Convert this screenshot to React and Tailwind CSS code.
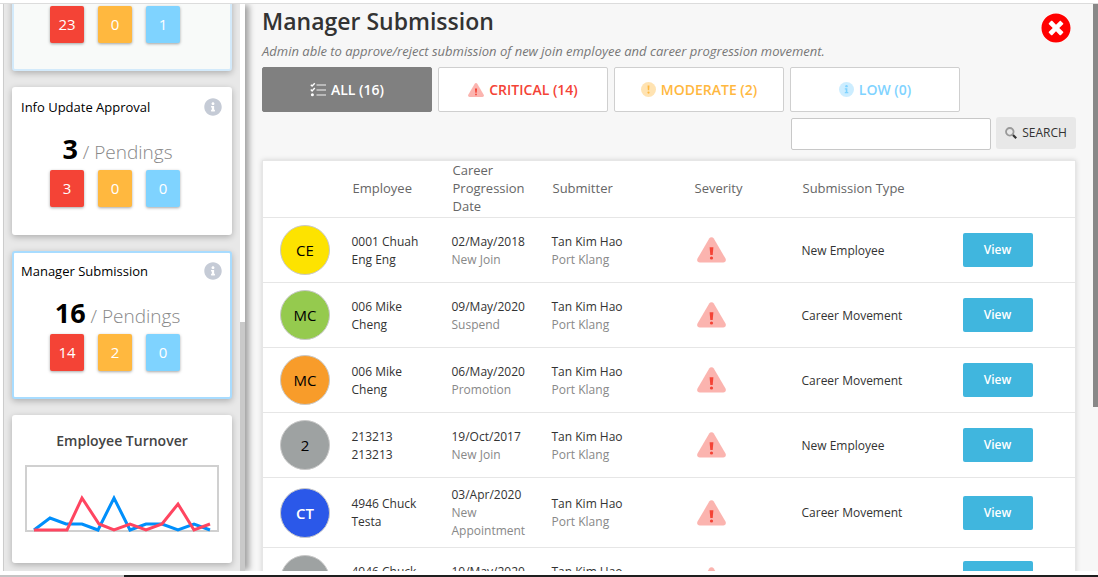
import { FaTimesCircle, FaInfoCircle } from "react-icons/fa";
import clsx from "clsx";

const pendingCards = [
  { id: "summary", counts: [23, 0, 1], tone: "border-2 border-[#d3eafb] bg-[#f8faf9]" },
  { id: "info", title: "Info Update Approval", total: 3, counts: [3, 0, 0], tone: "border-2 border-white bg-white" },
  { id: "manager", title: "Manager Submission", total: 16, counts: [14, 2, 0], tone: "border-2 border-[#a8dcff] bg-white" }
];

const countColors = ["bg-[#f44336]", "bg-[#ffb83f]", "bg-[#7fd3ff]"];

const rows = [
  { initials: "CE", avatar: "bg-[#fde300] text-black", employee: "0001 Chuah Eng Eng", date: "02/May/2018", reason: "New Join", type: "New Employee" },
  { initials: "MC", avatar: "bg-[#95ca4e] text-black", employee: "006 Mike Cheng", date: "09/May/2020", reason: "Suspend", type: "Career Movement" },
  { initials: "MC", avatar: "bg-[#f89c2a] text-black", employee: "006 Mike Cheng", date: "06/May/2020", reason: "Promotion", type: "Career Movement" },
  { initials: "2", avatar: "bg-[#9ea2a2] text-black", employee: "213213 213213", date: "19/Oct/2017", reason: "New Join", type: "New Employee" },
  { initials: "CT", avatar: "bg-[#2b58e9] text-white font-semibold", employee: "4946 Chuck Testa", date: "03/Apr/2020", reason: "New Appointment", type: "Career Movement" },
  { avatar: "bg-[#9ea2a2]", employee: "4946 Chuck", date: "10/May/2020" }
];

const filters = [
  { label: "ALL (16)", icon: ListIcon, tone: "border-[#808080] bg-[#808080] text-white" },
  { label: "CRITICAL (14)", icon: CriticalIcon, tone: "border-[#cfcfcf] bg-white text-[#f44336]" },
  { label: "MODERATE (2)", icon: ModerateIcon, tone: "border-[#cfcfcf] bg-white text-[#ffb83f]" },
  { label: "LOW (0)", icon: LowIcon, tone: "border-[#cfcfcf] bg-white text-[#7fd3ff]" }
];

function ListIcon() {
  return (
    <svg viewBox="0 0 16 16" className="size-4" fill="none" stroke="currentColor">
      <path d="M.8 2.8l1.3 1.3L4.8 1.3M.8 7.6l1.3 1.3 2.7-2.8" strokeWidth="1.4" />
      <circle cx="2.4" cy="12.8" r="1.5" fill="currentColor" stroke="none" />
      <path d="M6.5 3H16M6.5 8H16M6.5 13H16" strokeWidth="2" opacity=".45" />
    </svg>
  );
}

function CriticalIcon({ className = "size-4" }) {
  return (
    <svg viewBox="0 0 29 26" className={className} fill="currentColor">
      <path d="M12.2 1.6a2.7 2.7 0 0 1 4.6 0l11.7 20c1 1.8-.2 3.9-2.3 3.9H2.8C.7 25.5-.5 23.4.5 21.6z" opacity=".4" />
      <path d="M12.6 10.3h3.8l-.7 7.7h-2.4z" />
      <circle cx="14.5" cy="21" r="1.6" />
    </svg>
  );
}

function ModerateIcon() {
  return (
    <svg viewBox="0 0 16 16" className="size-[15px]" fill="currentColor">
      <circle cx="8" cy="8" r="8" opacity=".4" />
      <path d="M7 3.6h2l-.3 5.2H7.3z" />
      <circle cx="8" cy="11.3" r="1.2" />
    </svg>
  );
}

function LowIcon() {
  return (
    <svg viewBox="0 0 16 16" className="size-[15px]" fill="currentColor">
      <circle cx="8" cy="8" r="8" opacity=".4" />
      <circle cx="8" cy="4.4" r="1.3" />
      <path d="M6.2 6.7h2.7v4h1V12H6.2v-1.3h1V8h-1z" />
    </svg>
  );
}

function SearchIcon() {
  return (
    <svg viewBox="0 0 12 12" className="size-3" fill="none">
      <circle cx="4.8" cy="4.8" r="3.8" stroke="#999" strokeWidth="1.8" />
      <path d="M8 8l3.2 3.2" stroke="#333" strokeWidth="2.2" />
    </svg>
  );
}

function PendingCard({ title, total, counts, tone }) {
  return (
    <section className={clsx("flex h-[148px] shrink-0 flex-col justify-end rounded-[3px] pb-[26px] shadow-[0_2px_6px_rgba(0,0,0,0.25)]", tone)}>
      {title && (
        <>
          <div className="flex items-center justify-between pr-2 pl-[7px]">
            <h3 className="text-[13px] leading-5 text-black">{title}</h3>
            <button type="button" aria-label={`About ${title}`} className="text-[#c5cbd6]">
              <FaInfoCircle size={18} />
            </button>
          </div>
          <p className="mt-4 pr-[9px] text-center leading-8 text-[#888]">
            <span className="text-[27px] font-bold text-black">{total}</span>
            <span className="text-[19px] font-light"> / Pendings</span>
          </p>
        </>
      )}
      <div className="mt-px flex justify-center gap-[14px] pr-[14px]">
        {counts.map((count, index) => (
          <span key={index} className={clsx("flex h-[37px] w-[34px] items-center justify-center rounded-[2px] text-[15px] text-white shadow-[0_1px_3px_rgba(0,0,0,0.35)]", countColors[index])}>
            {count}
          </span>
        ))}
      </div>
    </section>
  );
}

function TurnoverCard() {
  return (
    <section className="h-[148px] shrink-0 rounded-[3px] bg-white px-[13px] pt-4 shadow-[0_2px_6px_rgba(0,0,0,0.25)]">
      <h3 className="text-center text-[14px] leading-5 font-semibold text-[#444]">Employee Turnover</h3>
      <svg viewBox="0 0 194 67" className="mt-[14px] block w-full" fill="none">
        <rect x="1" y="1" width="192" height="65" stroke="#d0d0d0" strokeWidth="2" />
        <g strokeWidth="3">
          <path d="M9 65l16-12 16 6h16l16 6L89 33l16 32 16-6h16l16 6 16-6 16 6" stroke="#008ffb" />
          <path d="M9 65h33L57 33l17 26 15 6 16-6 16 6 16-6 16-20 16 26 16-6" stroke="#ff4560" />
        </g>
      </svg>
    </section>
  );
}

function SubmissionTable() {
  return (
    <table className="mt-[10px] w-full table-fixed border border-[#e6e6e6] bg-white text-left text-[12px] leading-[18px] text-[#333] shadow-[0_0_5px_rgba(0,0,0,0.15)]">
      <colgroup>
        <col className="w-[89px]" />
        <col className="w-[100px]" />
        <col className="w-[100px]" />
        <col className="w-[142px]" />
        <col className="w-[108px]" />
        <col />
        <col className="w-[113px]" />
      </colgroup>
      <thead>
        <tr className="h-[57px] border-b border-[#e6e6e6] text-[13px] text-[#666]">
          <th aria-label="Avatar" />
          <th className="pb-[2px] pl-px font-normal">Employee</th>
          <th className="pr-5 pb-[2px] pl-px font-normal">Career Progression Date</th>
          <th className="pb-[2px] pl-px font-normal">Submitter</th>
          <th className="pb-[2px] pl-px font-normal">Severity</th>
          <th className="pb-[2px] pl-px font-normal">Submission Type</th>
          <th aria-label="Action" />
        </tr>
      </thead>
      <tbody>
        {rows.map((row, index) => (
          <tr key={index} className="h-[65px] border-b border-[#e6e6e6]">
            <td className="pl-[17px]">
              <span className={clsx("flex size-[50px] items-center justify-center rounded-full border border-[#c8c8c8] text-[15px]", row.avatar)}>{row.initials}</span>
            </td>
            <td className="pt-px pr-6">
              {row.employee}
              {!row.reason && <span className="block h-[18px]" />}
            </td>
            <td className="pt-2 pr-4 pb-[7px]">
              {row.date}
              <span className="block min-h-[18px] text-[#888]">{row.reason}</span>
            </td>
            <td className="pt-px">
              Tan Kim Hao
              <span className="block min-h-[18px] text-[#888]">{row.reason && "Port Klang"}</span>
            </td>
            <td className="pl-[3px] text-[#f44336]">
              <CriticalIcon className="h-[26px] w-[29px]" />
            </td>
            <td className="pt-px">{row.type}</td>
            <td>
              <button type="button" aria-label="View" className="h-[34px] w-[70px] rounded-[2px] bg-[#40b6de] text-[12px] font-semibold text-white">
                {row.type && "View"}
              </button>
            </td>
          </tr>
        ))}
      </tbody>
    </table>
  );
}

export default function App() {
  return (
    <div className="flex h-screen flex-col overflow-hidden bg-white font-['Open_Sans','Noto_Sans',sans-serif]">
      <div className="h-1 shrink-0 border-b border-[#dcdcdc]" />
      <div className="flex min-h-0 flex-1 overflow-hidden bg-[#f7f7f7]">
        <div className="w-[3px] shrink-0 bg-white" />
        <aside className="relative z-10 flex w-[242px] shrink-0 border-l border-[#ccc] bg-[#e8e8e8] shadow-[5px_0_6px_-1px_rgba(0,0,0,0.35)]">
          <div className="flex min-w-0 flex-1 flex-col justify-end gap-4 overflow-hidden p-2">
            {pendingCards.map((card) => (
              <PendingCard key={card.id} {...card} />
            ))}
            <TurnoverCard />
          </div>
          <div className="flex w-[5px] flex-col justify-end bg-white">
            <div className="h-[44%] bg-[#c9c9c9]" />
          </div>
        </aside>

        <main className="min-w-0 flex-1 overflow-hidden pr-[17px] pl-[17px]">
          <header className="flex items-start justify-between">
            <div>
              <h1 className="text-[23px] leading-[34px] font-semibold text-[#333]">Manager Submission</h1>
              <p className="mt-px text-[13px] leading-6 text-[#777] italic">Admin able to approve/reject submission of new join employee and career progression movement.</p>
            </div>
            <button type="button" aria-label="Close" className="mt-[9px] mr-[5px] rounded-full bg-white text-[#f00]">
              <FaTimesCircle size={30} />
            </button>
          </header>

          <div className="mt-1 flex gap-[6px]">
            {filters.map(({ label, icon: Icon, tone }) => (
              <button key={label} type="button" className={clsx("flex h-[45px] w-[170px] items-center justify-center gap-[5px] rounded-[2px] border text-[14px] font-semibold", tone)}>
                <Icon />
                {label}
              </button>
            ))}
          </div>

          <form className="mt-[5px] flex justify-end gap-[5px]" onSubmit={(event) => event.preventDefault()}>
            <input type="text" aria-label="Search submissions" className="mt-px h-8 w-[200px] rounded-[2px] border border-[#c8c8c8] bg-white px-2 text-[13px] outline-none" />
            <button type="submit" className="flex h-8 w-20 items-center justify-center gap-[5px] rounded-[3px] bg-[#e8e8e8] text-[12px] text-[#333]">
              <SearchIcon />
              SEARCH
            </button>
          </form>

          <SubmissionTable />
        </main>

        <div className="w-[5px] shrink-0">
          <div className="h-[71%] bg-[#888]" />
        </div>
      </div>
      <div className="h-1 shrink-0 bg-white" />
      <div className="flex h-[2px] shrink-0 bg-[#1e1e1e]">
        <div className="w-[124px] bg-[#c4c4c4]" />
      </div>
    </div>
  );
}
